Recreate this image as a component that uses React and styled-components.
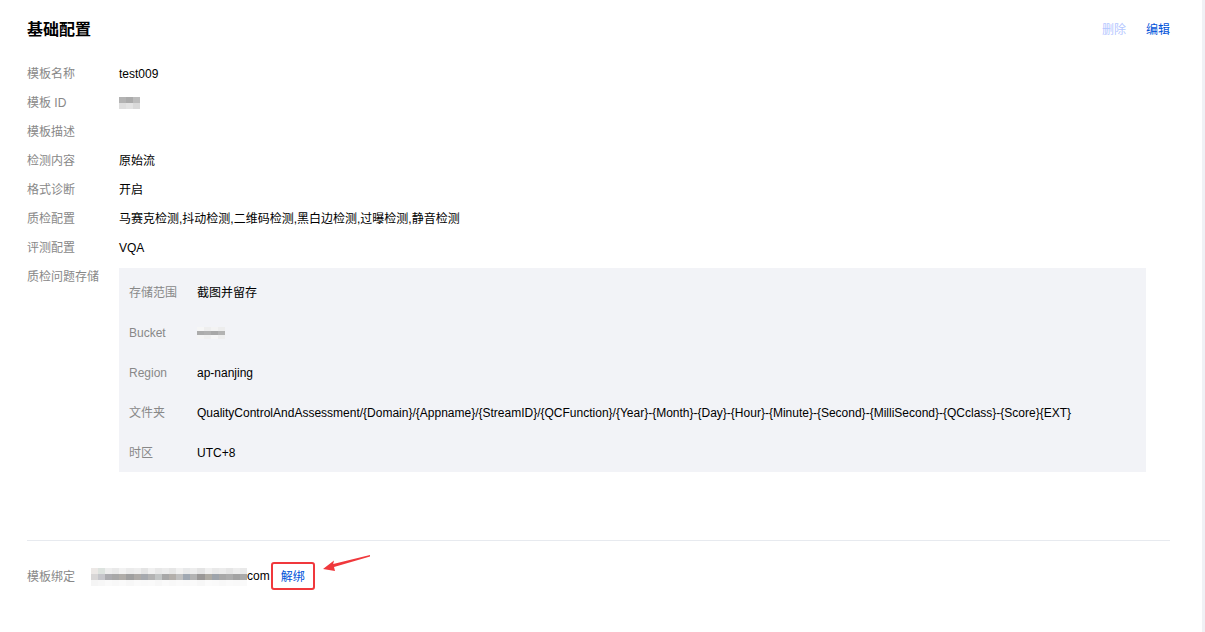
import React from "react";
import styled, { createGlobalStyle } from "styled-components";

const Global = createGlobalStyle`
  html, body { margin: 0; padding: 0; background: #f0f1f5; }
  body { font-family: "Liberation Sans", "Noto Sans CJK SC", sans-serif; font-size: 12px; color: #000; }
  * { box-sizing: border-box; }
`;

const Page = styled.div`
  width: 1202px;
  min-height: 632px;
  background: #fff;
  padding: 19px 32px 0 27px;
`;

const Header = styled.div`
  display: flex;
  align-items: center;
  justify-content: space-between;
  height: 22px;
  margin-bottom: 18.5px;
`;

const Title = styled.h2`
  margin: 0;
  font-size: 16px;
  font-weight: 700;
  line-height: 22px;
  color: #000;
`;

const Actions = styled.div`
  display: flex;
  gap: 20px;
`;

const LinkBtn = styled.span`
  font-size: 12px;
  line-height: 22px;
  color: ${(p) => (p.$disabled ? "#b5c7ff" : "#0052d9")};
  cursor: ${(p) => (p.$disabled ? "not-allowed" : "pointer")};
`;

const Row = styled.div`
  display: grid;
  grid-template-columns: 92px 1fr;
  padding: 6px 0;
  line-height: 17px;
`;

const Label = styled.div`
  color: #888;
`;

const Value = styled.div`
  color: #000;
  display: flex;
  align-items: center;
  min-height: 17px;
`;

const StorageBox = styled.div`
  background: #f2f3f7;
  margin: -1px 24px 0 0;
  padding: 4px 10px 0;
`;

const SubRow = styled.div`
  display: grid;
  grid-template-columns: 68px 1fr;
  align-items: center;
  height: 40px;
  padding-top: 3px;
`;

const Divider = styled.div`
  height: 1px;
  background: #e7eaef;
  margin-top: 62px;
`;

const BindRow = styled.div`
  display: flex;
  align-items: center;
  height: 28px;
  margin-top: 21px;
`;

const BindLabel = styled.div`
  color: #888;
  width: 64px;
`;

const Email = styled.span`
  color: #000;
`;

const Highlight = styled.span`
  position: relative;
  display: inline-flex;
  align-items: center;
  height: 28px;
  padding: 0 8px;
  margin-left: 1px;
  border: 2px solid #f0383c;
  border-radius: 3px;
  color: #0052d9;
  cursor: pointer;
`;

const Arrow = styled.svg`
  position: absolute;
  left: 49px;
  top: -9px;
  overflow: visible;
`;

const Mosaic = styled.span`
  display: inline-grid;
  grid-template-columns: repeat(${(p) => p.$cols}, ${(p) => p.$w}px);
  grid-auto-rows: ${(p) => p.$h}px;
  vertical-align: middle;
`;

const Cell = styled.span`
  display: block;
`;

function Pix({ cols, w, h, colors, style }) {
  return (
    <Mosaic $cols={cols} $w={w} $h={h} style={style}>
      {colors.map((c, i) => (
        <Cell key={i} style={{ background: c }} />
      ))}
    </Mosaic>
  );
}

const idColors = ["#b3b3b3", "#ababab", "#bcbcbc", "#dedede", "#e3e3e3", "#d9d9d9"];
const bucketColors = [
  "#f6f6f6", "#eeeeee", "#f3f3f3", "#ededed",
  "#acacac", "#b0b0b0", "#a8a8a8", "#b3b3b3",
  "#f4f4f4", "#f0f0f0", "#f6f6f6", "#eeeeee",
];

const emailTop = [
  "#ece8e6","#dde3df","#eeeeee","#e9e9e9","#f2f2f2","#ebebeb","#eeeeee","#e4e4e4","#f0f0f0","#e8e8e8",
  "#ececec","#e6e6e6","#f1f1f1","#e8e9ea","#ededed","#e4e4e4","#f0f0f0","#e9e9e9","#ececec","#e6e6e6","#ededed","#e9e9e9",
];
const emailMid = [
  "#d8d6d6","#c6c6cb","#acacb0","#a8a8a8","#b0ada9","#a0a0a0","#aeaba8","#a6a9ae","#b3b3b3","#c2c5c5",
  "#a8a8a8","#b3afab","#c0c0c0","#a0a8b2","#b3b3b3","#9a9897","#aeaba4","#9ea4ab","#a8a8a8","#adadad","#a3a3a3","#aaaaaa",
];
const emailBot = [
  "#f5f5f5","#f7f7f7","#fafafa","#f8f8f8","#fafafa","#f7f7f7","#fafafa","#f9f9f9","#fafafa","#f7f7f7",
  "#fafafa","#f8f8f8","#fafafa","#f9f9f9","#fafafa","#f7f7f7","#fbfbfb","#fafafa","#f8f8f8","#fafafa","#f9f9f9","#fafafa",
];

const rows = [
  ["模板名称", "test009"],
  ["模板 ID", "__id"],
  ["模板描述", ""],
  ["检测内容", "原始流"],
  ["格式诊断", "开启"],
  ["质检配置", "马赛克检测,抖动检测,二维码检测,黑白边检测,过曝检测,静音检测"],
  ["评测配置", "VQA"],
];

const storage = [
  ["存储范围", "截图并留存"],
  ["Bucket", "__bucket"],
  ["Region", "ap-nanjing"],
  [
    "文件夹",
    "QualityControlAndAssessment/{Domain}/{Appname}/{StreamID}/{QCFunction}/{Year}-{Month}-{Day}-{Hour}-{Minute}-{Second}-{MilliSecond}-{QCclass}-{Score}{EXT}",
  ],
  ["时区", "UTC+8"],
];

function renderValue(v) {
  if (v === "__id") return <Pix cols={3} w={7} h={6} colors={idColors} />;
  if (v === "__bucket") return <Pix cols={4} w={7} h={4} colors={bucketColors} />;
  return v;
}

export default function App() {
  return (
    <>
      <Global />
      <Page>
        <Header>
          <Title>基础配置</Title>
          <Actions>
            <LinkBtn $disabled>删除</LinkBtn>
            <LinkBtn>编辑</LinkBtn>
          </Actions>
        </Header>

        {rows.map(([l, v]) => (
          <Row key={l}>
            <Label>{l}</Label>
            <Value>{renderValue(v)}</Value>
          </Row>
        ))}

        <Row>
          <Label>质检问题存储</Label>
          <StorageBox>
            {storage.map(([l, v]) => (
              <SubRow key={l}>
                <Label>{l}</Label>
                <Value>{renderValue(v)}</Value>
              </SubRow>
            ))}
          </StorageBox>
        </Row>

        <Divider />

        <BindRow>
          <BindLabel>模板绑定</BindLabel>
          <Pix
            cols={22}
            w={7.1}
            h={6}
            colors={[...emailTop, ...emailMid, ...emailBot]}
            style={{ marginTop: 2 }}
          />
          <Email>com</Email>
          <Highlight>
            解绑
            <Arrow width="50" height="20" viewBox="0 0 50 20">
              <polygon points="1,14 12,5.5 11.2,9 48,0 48,1.4 12,12 13,16" fill="#f0383c" />
            </Arrow>
          </Highlight>
        </BindRow>
      </Page>
    </>
  );
}
